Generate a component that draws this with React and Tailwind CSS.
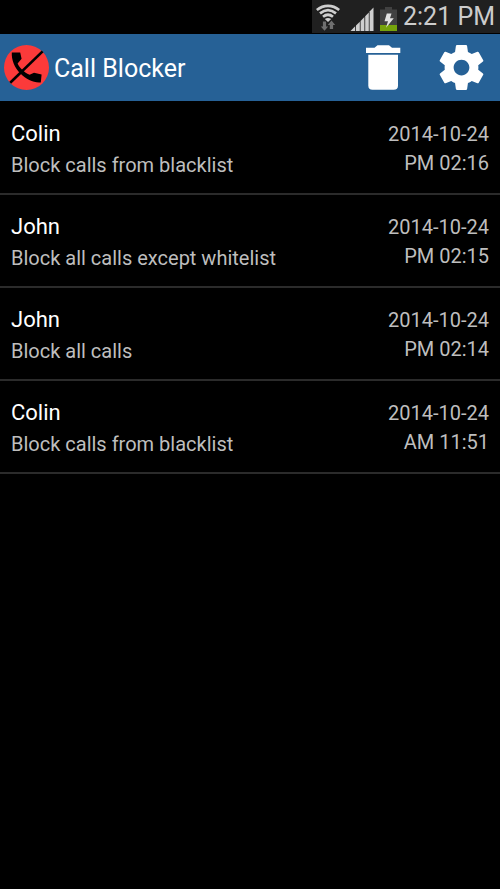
import React from 'react';

const calls = [
  { id: 1, name: 'Colin', rule: 'Block calls from blacklist', date: '2014-10-24', time: 'PM 02:16' },
  { id: 2, name: 'John', rule: 'Block all calls except whitelist', date: '2014-10-24', time: 'PM 02:15' },
  { id: 3, name: 'John', rule: 'Block all calls', date: '2014-10-24', time: 'PM 02:14' },
  { id: 4, name: 'Colin', rule: 'Block calls from blacklist', date: '2014-10-24', time: 'AM 11:51' },
];

function WifiIcon() {
  return (
    <svg className="h-7 w-6" viewBox="0 0 24 28" fill="none" aria-hidden="true">
      <g stroke="#cfcfcf" strokeWidth="2.7">
        <path d="M0.8 7C7.5 1.4 16.5 1.4 23.2 7" />
        <path d="M4 10.4C9 6.4 15 6.4 20 10.4" />
        <path d="M7 13.7C10.2 11.2 13.8 11.2 17 13.7" />
      </g>
      <path d="M8.8 16C10.8 14.6 13.2 14.6 15.2 16L12 19Z" fill="#cfcfcf" />
      <path d="M6.9 18.5H10.1V23.5H12.2L8.5 27.8L4.8 23.5H6.9Z" fill="#707070" />
      <path d="M13.8 26V22H11.8L15.5 17.6L19.2 22H17.1V26Z" fill="#707070" />
    </svg>
  );
}

function SignalIcon() {
  return (
    <svg className="h-6 w-6" viewBox="0 0 24 24" fill="#cfcfcf" aria-hidden="true">
      <path d="M0.5 24L5.2 19.3V24Z" />
      <path d="M6 18.5L9.8 14.7V24H6Z" />
      <path d="M10.6 14L14.4 10.1V24H10.6Z" />
      <path d="M15.2 9.2L18.8 5.5V24H15.2Z" />
      <path d="M19.6 4.6L23.5 0.5V24H19.6Z" />
    </svg>
  );
}

function BatteryIcon() {
  return (
    <svg className="h-6 w-[17px]" viewBox="0 0 17 24" aria-hidden="true">
      <path d="M5 0H12V2.5H17V18H0V2.5H5Z" fill="#414141" />
      <path d="M0 18H17V24H0Z" fill="#76a30c" />
      <path d="M6.8 6.5H11.5L10 11.3H13.8L6 20.8L8 14.2H4.5Z" fill="#e2e2e2" />
    </svg>
  );
}

function Logo() {
  return (
    <svg className="h-[45px] w-[45px]" viewBox="0 0 45 45" aria-hidden="true">
      <circle cx="22.5" cy="22.5" r="22.5" fill="#fb3a3a" />
      <path
        d="M7.8 7.6H16.2L17.6 13.8L13.6 18.4C15.2 22.2 19.6 27 25.6 29.8L30 27.8L37.6 29.4L36.8 37.4C29.5 38 22.5 34.8 16.4 28.6C10.4 22.4 7.4 15.2 7.8 7.6Z"
        fill="#000"
      />
      <path d="M6.2 37.8L38.6 6.4" stroke="#000" strokeWidth="2.6" />
    </svg>
  );
}

function TrashIcon() {
  return (
    <svg className="h-[45px] w-[35px]" viewBox="0 0 35 45" fill="#fff" aria-hidden="true">
      <path d="M0 2.8H8.5L11.5 0.3H23L26 2.8H34.3V8H0Z" />
      <path d="M2.3 9.8H32V40.5Q32 44.8 27.7 44.8H6.6Q2.3 44.8 2.3 40.5Z" />
    </svg>
  );
}

function GearIcon() {
  return (
    <svg className="h-[45px] w-[45px]" viewBox="2 2 20 20" fill="#fff" aria-hidden="true">
      <path d="M19.43 12.98c.04-.32.07-.64.07-.98s-.03-.66-.07-.98l2.11-1.65c.19-.15.24-.42.12-.64l-2-3.46c-.12-.22-.39-.3-.61-.22l-2.49 1c-.52-.4-1.08-.73-1.69-.98l-.38-2.65C14.46 2.18 14.25 2 14 2h-4c-.25 0-.46.18-.49.42l-.38 2.65c-.61.25-1.17.59-1.69.98l-2.49-1c-.23-.09-.49 0-.61.22l-2 3.46c-.13.22-.07.49.12.64l2.11 1.65c-.04.32-.07.65-.07.98s.03.66.07.98l-2.11 1.65c-.19.15-.24.42-.12.64l2 3.46c.12.22.39.3.61.22l2.49-1c.52.4 1.08.73 1.69.98l.38 2.65c.03.24.24.42.49.42h4c.25 0 .46-.18.49-.42l.38-2.65c.61-.25 1.17-.59 1.69-.98l2.49 1c.23.09.49 0 .61-.22l2-3.46c.12-.22.07-.49-.12-.64l-2.11-1.65zM12 15.5c-1.93 0-3.5-1.57-3.5-3.5s1.57-3.5 3.5-3.5 3.5 1.57 3.5 3.5-1.57 3.5-3.5 3.5z" />
    </svg>
  );
}

function StatusBar() {
  return (
    <div className="flex h-[34px] justify-end border-b border-black bg-black">
      <div className="flex items-center bg-[#202020] pr-[5px] pl-1">
        <WifiIcon />
        <div className="ml-2.5 flex items-center gap-1.5 pt-1">
          <SignalIcon />
          <BatteryIcon />
        </div>
        <span className="ml-1.5 text-[25px] leading-8 text-[#cccccc]">2:21 PM</span>
      </div>
    </div>
  );
}

function CallRow({ call }) {
  return (
    <li className="flex justify-between border-b-2 border-[#2b2b2b] px-[11px] pt-4 pb-3">
      <div>
        <h2 className="text-[22px] leading-8 text-white">{call.name}</h2>
        <p className="text-xl leading-[30px] text-[#bebebe]">{call.rule}</p>
      </div>
      <div className="pt-0.5 pb-[3px] text-right text-xl leading-[29px] text-[#bebebe]">
        <p>{call.date}</p>
        <p>{call.time}</p>
      </div>
    </li>
  );
}

export default function App() {
  return (
    <div className="min-h-screen bg-black font-[Roboto,sans-serif]">
      <StatusBar />
      <header className="flex h-[67px] items-center bg-[#266196] pr-4 pl-1">
        <Logo />
        <h1 className="ml-[5px] flex-1 pt-0.5 text-[25px] text-white">Call Blocker</h1>
        <div className="flex items-center gap-[38px]">
          <button type="button" aria-label="Delete all">
            <TrashIcon />
          </button>
          <button type="button" aria-label="Settings">
            <GearIcon />
          </button>
        </div>
      </header>
      <ul className="pt-px">
        {calls.map((call) => (
          <CallRow key={call.id} call={call} />
        ))}
      </ul>
    </div>
  );
}
